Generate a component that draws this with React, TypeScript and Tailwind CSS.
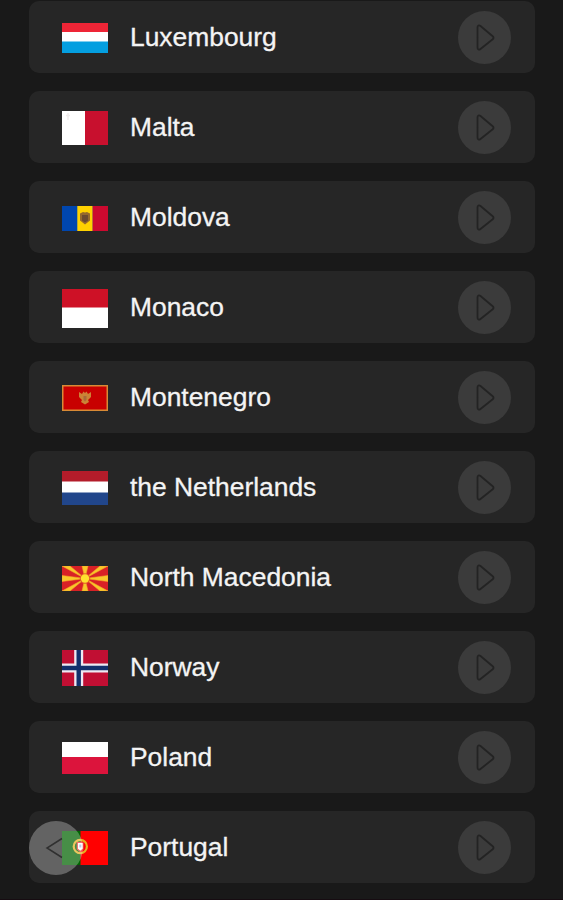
import type { ReactNode } from "react"

type Country = {
  name: string
  height: number
  flag: ReactNode
}

const countries: Country[] = [
  {
    name: "Luxembourg",
    height: 30,
    flag: (
      <>
        <rect width="46" height="30" fill="#fff" />
        <rect width="46" height="9" fill="#ee2536" />
        <rect y="18.5" width="46" height="11.5" fill="#049fe0" />
      </>
    ),
  },
  {
    name: "Malta",
    height: 34,
    flag: (
      <>
        <rect width="46" height="34" fill="#fff" />
        <rect x="23" width="23" height="34" fill="#c8102e" />
        <path d="M6 2v7M4 4.5h4" stroke="#efebeb" strokeWidth="1.5" />
      </>
    ),
  },
  {
    name: "Moldova",
    height: 25,
    flag: (
      <>
        <rect width="46" height="25" fill="#0046ae" />
        <rect x="15.3" width="15.4" height="25" fill="#ffd200" />
        <rect x="30.7" width="15.3" height="25" fill="#cc092f" />
        <path d="M18 7.5l3-1.5 2 .5 2-.5 3 1.500v7l-5 4-5-4z" fill="#96692c" />
        <path d="M20 9h6v5.500l-3 2-3-2z" fill="#6b4a30" />
      </>
    ),
  },
  {
    name: "Monaco",
    height: 39,
    flag: (
      <>
        <rect width="46" height="39" fill="#fff" />
        <rect width="46" height="18.5" fill="#ce1126" />
      </>
    ),
  },
  {
    name: "Montenegro",
    height: 26,
    flag: (
      <>
        <rect width="46" height="26" fill="#d88a35" />
        <rect x="1.5" y="1.5" width="43" height="23" fill="#c80000" />
        <path
          d="M17 7l3 2 1.5-2.5L23 8l1.5-1.5L26 9l3-2v5l-3 3 1 2-4 2.500-4-2.500 1-2-3-3z"
          fill="#cc8236"
        />
        <path d="M21.5 11h3v4L23 16.5 21.5 15z" fill="#a86a38" />
      </>
    ),
  },
  {
    name: "the Netherlands",
    height: 34,
    flag: (
      <>
        <rect width="46" height="34" fill="#fff" />
        <rect width="46" height="10.5" fill="#b31c2a" />
        <rect y="21.5" width="46" height="12.5" fill="#21468b" />
      </>
    ),
  },
  {
    name: "North Macedonia",
    height: 25,
    flag: (
      <>
        <rect width="46" height="25" fill="#d82126" />
        <path
          d="M0 0h8l15 12.500zM46 0h-8L23 12.500zM0 25h8l15-12.500zM46 25h-8L23 12.500zM20 0h6l-3 12.500zM20 25h6l-3-12.500zM0 9.500v6l23-3zM46 9.500v6l-23-3z"
          fill="#f8c82a"
          stroke="#f3a428"
          strokeWidth="0.6"
        />
        <circle cx="23" cy="12.5" r="5.2" fill="#e4592a" />
        <circle cx="23" cy="12.5" r="4.2" fill="#ffe22e" />
      </>
    ),
  },
  {
    name: "Norway",
    height: 36,
    flag: (
      <>
        <rect width="46" height="36" fill="#c10f33" />
        <path d="M16.7 0v36M0 18h46" stroke="#eeeaf2" strokeWidth="9" />
        <path d="M16.7 0v36M0 18h46" stroke="#12306b" strokeWidth="4.4" />
      </>
    ),
  },
  {
    name: "Poland",
    height: 32,
    flag: (
      <>
        <rect width="46" height="32" fill="#fff" />
        <rect y="15" width="46" height="17" fill="#dc143c" />
      </>
    ),
  },
  {
    name: "Portugal",
    height: 34,
    flag: (
      <>
        <rect width="46" height="34" fill="#f00" />
        <rect width="18.5" height="34" fill="#006200" />
        <circle cx="18.3" cy="15.5" r="6.6" fill="none" stroke="#e5b020" strokeWidth="2.2" />
        <path d="M15.3 11.5h6v6.500l-3 2.500-3-2.500z" fill="#fff" stroke="#e33" strokeWidth="1.2" />
        <path d="M17.3 13.5h2v3h-2z" fill="#9fb2dc" />
      </>
    ),
  },
]

function PlayIcon() {
  return (
    <svg viewBox="0 0 53 53" className="size-full" fill="none" aria-hidden="true">
      <path
        d="M19.5 16.500v20c0 2.200 1.500 2.700 3 1.500l12.200-9.800c1.100-.9 1.100-2 0-2.900L22.500 15c-1.500-1.200-3-.7-3 1.500z"
        stroke="#232323"
        strokeWidth="1.8"
        strokeLinejoin="round"
      />
    </svg>
  )
}

function CountryRow({ name, height, flag }: Country) {
  return (
    <li className="flex h-[72px] items-center rounded-[10px] bg-[#262626] pr-6 pl-[33px]">
      <svg
        viewBox={`0 0 46 ${height}`}
        width="46"
        height={height}
        className="mt-[2px] shrink-0"
        aria-hidden="true"
      >
        {flag}
      </svg>
      <span className="ml-[22px] flex-1 text-[26.4px] leading-8 whitespace-nowrap text-[#f4f4f4] [-webkit-text-stroke:0.3px_#f4f4f4]">
        {name}
      </span>
      <button type="button" aria-label={name} className="size-[53px] rounded-full bg-[#3b3b3b]">
        <PlayIcon />
      </button>
    </li>
  )
}

export default function App() {
  return (
    <main className="relative h-[900px] w-full overflow-hidden border-b border-[#160c11] bg-[#191919] px-[29px] pt-px font-['Liberation_Sans',Arial,sans-serif]">
      <ul className="flex w-[506px] flex-col gap-[18px]">
        {countries.map((country) => (
          <CountryRow key={country.name} {...country} />
        ))}
      </ul>

      {/* Floating back button */}
      <button
        type="button"
        aria-label="Back"
        className="absolute top-[821px] left-[29px] size-[54px] rounded-full bg-white/28"
      >
        <svg viewBox="0 0 54 54" className="size-full" fill="none" aria-hidden="true">
          <path d="M33 17.500L18 27l15 9.500" stroke="#303030" strokeWidth="1.5" />
        </svg>
      </button>
    </main>
  )
}
